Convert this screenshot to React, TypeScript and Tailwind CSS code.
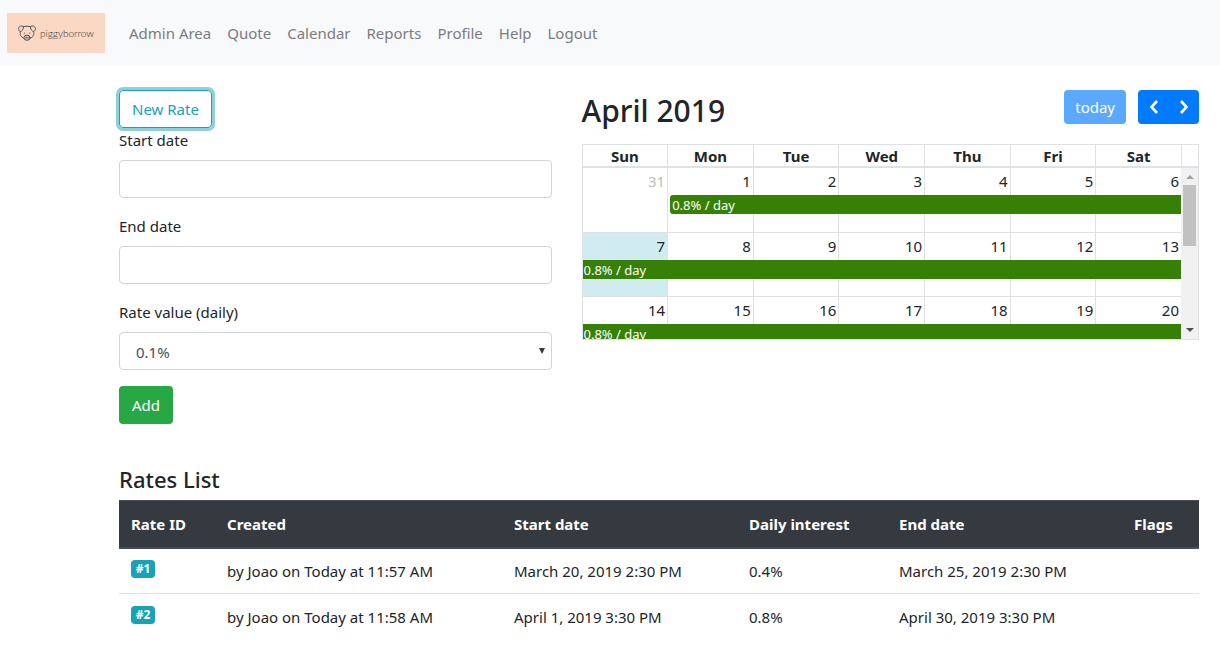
import type { ReactNode } from "react";

const navItems = ["Admin Area", "Quote", "Calendar", "Reports", "Profile", "Help", "Logout"];
const dayNames = ["Sun", "Mon", "Tue", "Wed", "Thu", "Fri", "Sat"];

const weeks = [
  { days: [31, 1, 2, 3, 4, 5, 6], startsMonday: true },
  { days: [7, 8, 9, 10, 11, 12, 13], startsMonday: false },
  { days: [14, 15, 16, 17, 18, 19, 20], startsMonday: false },
];

const rates = [
  { id: "#1", created: "by Joao on Today at 11:57 AM", start: "March 20, 2019 2:30 PM", interest: "0.4%", end: "March 25, 2019 2:30 PM" },
  { id: "#2", created: "by Joao on Today at 11:58 AM", start: "April 1, 2019 3:30 PM", interest: "0.8%", end: "April 30, 2019 3:30 PM" },
];

function Logo() {
  return (
    <a href="#" aria-label="piggyborrow" className="flex h-10 w-[98px] items-center gap-1 bg-[#fad8c4] pl-[11px] text-[#333]">
      <svg viewBox="0 0 18 16" className="h-4 w-[18px] shrink-0" fill="none" stroke="#555" strokeWidth="1" strokeLinecap="round" strokeLinejoin="round">
        <path d="M5.500 1.500C7.500 1.100 10.500 1.100 12.500 1.500" />
        <path d="M5.500 1.500C3.500 .2.700 1.300.6 3.600c0 1.500.7 2.400 1.700 2.900 1.700-.3 3.400-2 3.200-5Z" />
        <path d="M12.500 1.500c2-1.300 4.800-.2 4.900 2.100 0 1.500-.7 2.400-1.700 2.900-1.700-.3-3.400-2-3.200-5Z" />
        <path d="M2.300 6.500C1.500 9.500 2.800 12.300 6 13.300M15.700 6.500c.8 3-.5 5.800-3.700 6.800" />
        <ellipse cx="9" cy="12.700" rx="3.100" ry="2.600" fill="#55555533" />
        <path d="M8 12.300v.8M10 12.300v.8M6.300 8v.4M11.700 8v.4" />
      </svg>
      <span className="font-['Lato',sans-serif] text-[10px] leading-4 font-light">piggyborrow</span>
    </a>
  );
}

function Field({ id, label, children }: { id: string; label: string; children: ReactNode }) {
  return (
    <div className="mb-4 flex flex-col gap-2">
      <label htmlFor={id}>{label}</label>
      {children}
    </div>
  );
}

function RateForm() {
  const control = "h-[38px] w-full rounded border border-[#ced4da] bg-white text-[#495057]";
  return (
    <div>
      <button type="button" className="block h-[38px] rounded border border-[#17a2b8] px-3 text-[#17a2b8] shadow-[0_0_0_3px_rgba(23,162,184,0.5)]">
        New Rate
      </button>
      <form>
        <Field id="start" label="Start date">
          <input id="start" type="text" className={`${control} px-3`} />
        </Field>
        <Field id="end" label="End date">
          <input id="end" type="text" className={`${control} px-3`} />
        </Field>
        <Field id="rate" label="Rate value (daily)">
          <div className="relative">
            <select id="rate" className={`${control} appearance-none px-4 pt-0.5`}>
              <option>0.1%</option>
            </select>
            <svg viewBox="0 0 6 6" className="pointer-events-none absolute top-4 right-[7px] size-[6px]" fill="#343a40">
              <path d="M0 0h6L3 6Z" />
            </svg>
          </div>
        </Field>
        <button type="button" className="h-[38px] rounded bg-[#28a745] px-[13px] text-white">Add</button>
      </form>
    </div>
  );
}

function Chevron({ d }: { d: string }) {
  return (
    <svg viewBox="0 0 16 16" className="size-4" fill="none" stroke="white" strokeWidth="2.6">
      <path d={d} />
    </svg>
  );
}

function Calendar() {
  return (
    <section>
      <div className="mb-5 flex items-start justify-between">
        <h2 className="-mb-1 pt-1 text-[30px] leading-[34px] font-medium">April 2019</h2>
        <div className="flex gap-3">
          <button type="button" disabled className="h-[34px] rounded bg-[#5aa9ff] px-[11px] text-white">today</button>
          <div className="flex overflow-hidden rounded bg-[#007bff]">
            <button type="button" aria-label="Previous month" className="flex h-[34px] w-[31px] items-center justify-center">
              <Chevron d="M11 2 5.500 8l5.500 6" />
            </button>
            <button type="button" aria-label="Next month" className="flex h-[34px] w-[30px] items-center justify-center">
              <Chevron d="m5 2 5.500 6L5 14" />
            </button>
          </div>
        </div>
      </div>
      <div className="border-y border-r border-[#dee2e6]">
        <div className="flex border-b-2 border-[#dee2e6]">
          <div className="grid flex-1 grid-cols-7">
            {dayNames.map((d) => (
              <div key={d} className="h-[21px] border-l border-[#dee2e6] text-center leading-[22px] font-bold">{d}</div>
            ))}
          </div>
          <div className="w-[17px] border-l border-[#dee2e6]" />
        </div>
        <div className="flex h-[171px] overflow-hidden">
          <table aria-label="April 2019" className="flex-1 table-fixed border-separate border-spacing-0 self-start">
            <tbody>
              {weeks.map((week, w) => (
                <tr key={w} className="relative h-16">
                  {week.days.map((day, i) => (
                    <td
                      key={day}
                      className={`h-16 w-[14.28%] border-l border-[#dee2e6] p-0 pr-0.5 text-right align-top leading-[27px] ${w > 0 ? "border-t" : ""} ${day === 7 ? "bg-[#d1ecf1]" : ""} ${day === 31 ? "text-[#bcbebf]" : ""}`}
                    >
                      {day}
                      {i === 0 && (
                        <div className={`absolute right-0 h-[19px] overflow-hidden bg-[#378006] text-left text-[13px] leading-5 text-white ${w === 0 ? "top-[27px]" : "top-7"} ${week.startsMonday ? "left-[calc(100%/7+3px)] rounded-l-[3px] pl-0.5" : "left-px pl-px"}`}>
                          0.8% / day
                        </div>
                      )}
                    </td>
                  ))}
                </tr>
              ))}
            </tbody>
          </table>
          <div className="flex w-[17px] flex-col items-center bg-[#f1f1f1]">
            <svg viewBox="0 0 17 17" className="size-[17px] shrink-0" fill="#a3a3a3"><path d="M5 11h8L9 7Z" /></svg>
            <div className="h-[61px] w-[13px] bg-[#c1c1c1]" />
            <svg viewBox="0 0 17 17" className="mt-auto size-[17px] shrink-0" fill="#505050"><path d="M5 6h8l-4 4Z" /></svg>
          </div>
        </div>
      </div>
    </section>
  );
}

function RatesTable() {
  return (
    <section className="mt-10">
      <h4 className="mb-1.5 text-[22px] leading-[30px] font-medium">Rates List</h4>
      <table className="w-full table-fixed text-left">
        <colgroup>
          <col className="w-[96px]" />
          <col className="w-[287px]" />
          <col className="w-[235px]" />
          <col className="w-[150px]" />
          <col className="w-[235px]" />
          <col className="w-[77px]" />
        </colgroup>
        <thead>
          <tr className="h-[47px] border-t border-b-2 border-[#454d55] bg-[#343a40] text-white">
            {["Rate ID", "Created", "Start date", "Daily interest", "End date", "Flags"].map((h) => (
              <th key={h} className="px-3 font-bold">{h}</th>
            ))}
          </tr>
        </thead>
        <tbody>
          {rates.map((r) => (
            <tr key={r.id} className="h-[46px] border-b border-[#dee2e6] last:border-b-0">
              <td className="px-3 pb-1">
                <span className="block w-6 rounded bg-[#17a2b8] text-center text-xs leading-[18px] font-bold text-white">{r.id}</span>
              </td>
              <td className="px-3">{r.created}</td>
              <td className="px-3">{r.start}</td>
              <td className="px-3">{r.interest}</td>
              <td className="px-3">{r.end}</td>
              <td className="px-3" />
            </tr>
          ))}
        </tbody>
      </table>
    </section>
  );
}

export default function App() {
  return (
    <div className="bg-white font-['Noto_Sans','Open_Sans',sans-serif] text-[15px] leading-6 text-[#212529]">
      <nav className="flex h-[66px] items-center gap-4 bg-[#f8f9fa] px-[7px]">
        <Logo />
        <ul className="flex">
          {navItems.map((item) => (
            <li key={item}>
              <a href="#" className="block px-2 py-2 text-[#7b7c7d]">{item}</a>
            </li>
          ))}
        </ul>
      </nav>
      <main className="pt-6 pr-[21px] pl-[119px]">
        <div className="grid grid-cols-12 gap-x-[30px]">
          <div className="col-span-5"><RateForm /></div>
          <div className="col-span-7"><Calendar /></div>
        </div>
        <RatesTable />
      </main>
    </div>
  );
}
